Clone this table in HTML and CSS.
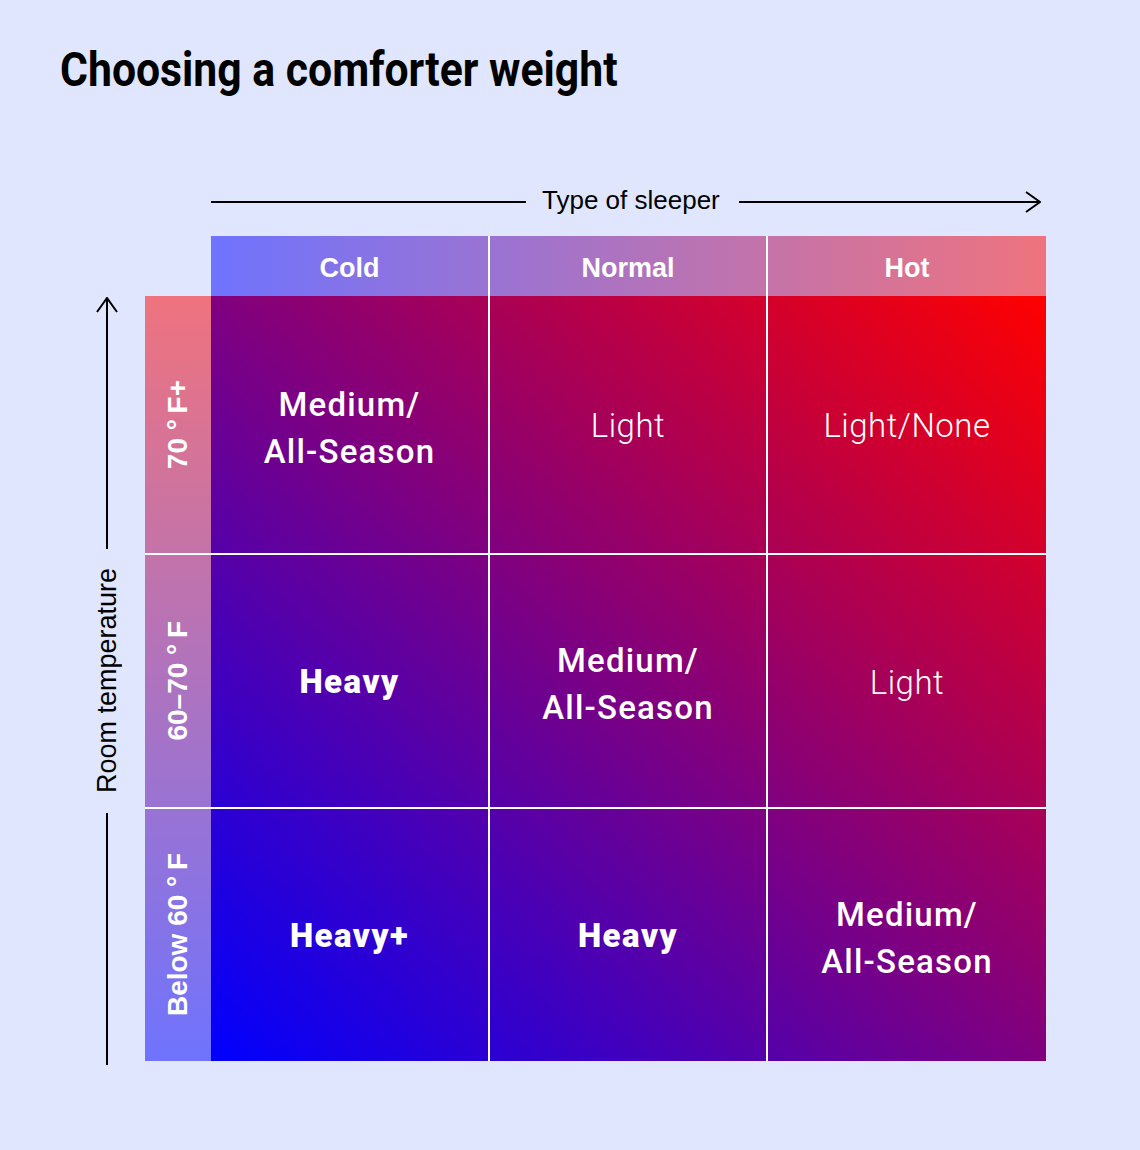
FILE: index.html
```html
<!DOCTYPE html>
<html lang="en">
<head>
<meta charset="utf-8">
<title>Choosing a comforter weight</title>
<link rel="stylesheet" href="styles.css">
</head>
<body>
<main class="page">
  <h1 class="title"><span class="title-text">Choosing a comforter weight</span></h1>
  <section class="chart">
    <div class="x-axis">
      <span class="x-line x-line-left"></span>
      <span class="x-label">Type of sleeper</span>
      <span class="x-line x-line-right"></span>
      <svg class="x-head" width="16" height="24" viewBox="0 0 16 24"><path d="M0 12 H15 M1 2 L15 12 L1 22" fill="none" stroke="#000" stroke-width="2"/></svg>
    </div>
    <div class="col-heads">
      <div class="col-head">Cold</div>
      <div class="col-head">Normal</div>
      <div class="col-head">Hot</div>
    </div>
    <div class="y-axis">
      <div class="y-part">
        <svg class="y-head" width="24" height="16" viewBox="0 0 24 16"><path d="M12 1 V16 M2 15 L12 1 L22 15" fill="none" stroke="#000" stroke-width="2"/></svg>
        <span class="y-line"></span>
      </div>
      <span class="y-label">Room temperature</span>
      <div class="y-part">
        <span class="y-line"></span>
      </div>
    </div>
    <div class="row-heads">
      <div class="row-head"><span>70 °&#8201;F+</span></div>
      <div class="row-head"><span>60–70 °&#8201;F</span></div>
      <div class="row-head"><span>Below 60 °&#8201;F</span></div>
    </div>
    <div class="cells">
      <div class="cell medium">Medium/<br>All-Season</div>
      <div class="cell light">Light</div>
      <div class="cell light">Light/None</div>
      <div class="cell heavy">Heavy</div>
      <div class="cell medium">Medium/<br>All-Season</div>
      <div class="cell light">Light</div>
      <div class="cell heavy">Heavy+</div>
      <div class="cell heavy">Heavy</div>
      <div class="cell medium">Medium/<br>All-Season</div>
    </div>
  </section>
</main>
</body>
</html>
```

FILE: styles.css
```css
* { box-sizing: border-box; }

html, body {
  margin: 0;
  padding: 0;
  background: #dfe6fd;
}

.page {
  width: 1140px;
  height: 1150px;
  padding-top: 46px;
  background: #dfe6fd;
  color: #000;
}

.title {
  margin: 0 0 0 60px;
  font-family: "Roboto", "Liberation Sans", sans-serif;
  font-weight: 700;
  font-size: 48px;
  line-height: 48px;
}
.title-text {
  display: inline-block;
  white-space: nowrap;
  transform: scaleX(0.89);
  transform-origin: left center;
}

.chart {
  display: grid;
  grid-template-columns: 145px 66px 835px;
  grid-template-rows: auto 60px 765px;
  margin-top: 91px;
}

/* horizontal axis */
.x-axis {
  grid-column: 3;
  grid-row: 1;
  height: 34px;
  margin-bottom: 17px;
  margin-right: 5px;
  display: flex;
  align-items: center;
}
.x-line {
  height: 2px;
  background: #000;
}
.x-line-left { width: 315px; }
.x-line-right { flex: 1; }
.x-head { display: block; margin-left: -15px; }
.x-label {
  margin: 0 19px 4px 16px;
  font-family: "Liberation Sans", Arial, sans-serif;
  font-size: 26px;
  line-height: 34px;
  white-space: nowrap;
}

/* column headers */
.col-heads {
  grid-column: 3;
  grid-row: 2;
  display: grid;
  grid-template-columns: 277px 278px 1fr;
  background: linear-gradient(to right, rgba(0, 0, 255, 0.5), rgba(255, 0, 0, 0.5));
}
.col-head {
  display: flex;
  align-items: center;
  justify-content: center;
  padding-top: 5px;
  color: #fff;
  font-family: "Liberation Sans", Arial, sans-serif;
  font-weight: 700;
  font-size: 27px;
}
.col-head + .col-head { border-left: 2px solid #fff; }

/* vertical axis */
.y-axis {
  grid-column: 1;
  grid-row: 3;
  width: 24px;
  margin: 1px 0 -4px 95px;
  display: flex;
  flex-direction: column;
  align-items: center;
}
.y-part {
  flex: 1;
  display: flex;
  flex-direction: column;
  align-items: center;
}
.y-head { display: block; flex: none; }
.y-line {
  flex: 1;
  width: 2px;
  background: #000;
}
.y-label {
  margin: 19px 0 19px 0;
  writing-mode: vertical-rl;
  transform: rotate(180deg);
  font-family: "Liberation Sans", Arial, sans-serif;
  font-size: 27px;
  line-height: 24px;
  white-space: nowrap;
}

/* row headers */
.row-heads {
  grid-column: 2;
  grid-row: 3;
  display: grid;
  grid-template-rows: 257px 254px 254px;
  background: linear-gradient(to bottom, rgba(255, 0, 0, 0.5), rgba(0, 0, 255, 0.5));
}
.row-head {
  display: flex;
  align-items: center;
  justify-content: center;
}
.row-head + .row-head { border-top: 2px solid #fff; }
.row-head span {
  writing-mode: vertical-rl;
  transform: rotate(180deg);
  color: #fff;
  font-family: "Liberation Sans", Arial, sans-serif;
  font-weight: 700;
  font-size: 28px;
  line-height: 30px;
  white-space: nowrap;
}

/* cells */
.cells {
  grid-column: 3;
  grid-row: 3;
  display: grid;
  grid-template-columns: 277px 278px 1fr;
  grid-template-rows: 257px 254px 254px;
  background: linear-gradient(to top right, #0000ff, #ff0000);
}
.cell {
  display: flex;
  align-items: center;
  justify-content: center;
  text-align: center;
  color: #fff;
  font-family: "Roboto", "Liberation Sans", sans-serif;
  font-size: 33px;
  line-height: 47px;
}
.cell:nth-child(3n+2), .cell:nth-child(3n+3) { border-left: 2px solid #fff; }
.cell:nth-child(n+4) { border-top: 2px solid #fff; }
.cell.medium { font-weight: 500; letter-spacing: 1.2px; padding-top: 6px; }
.cell.light { font-weight: 300; letter-spacing: 0.5px; padding-top: 2px; }
.cell.heavy { font-weight: 900; letter-spacing: 1.5px; }
```
